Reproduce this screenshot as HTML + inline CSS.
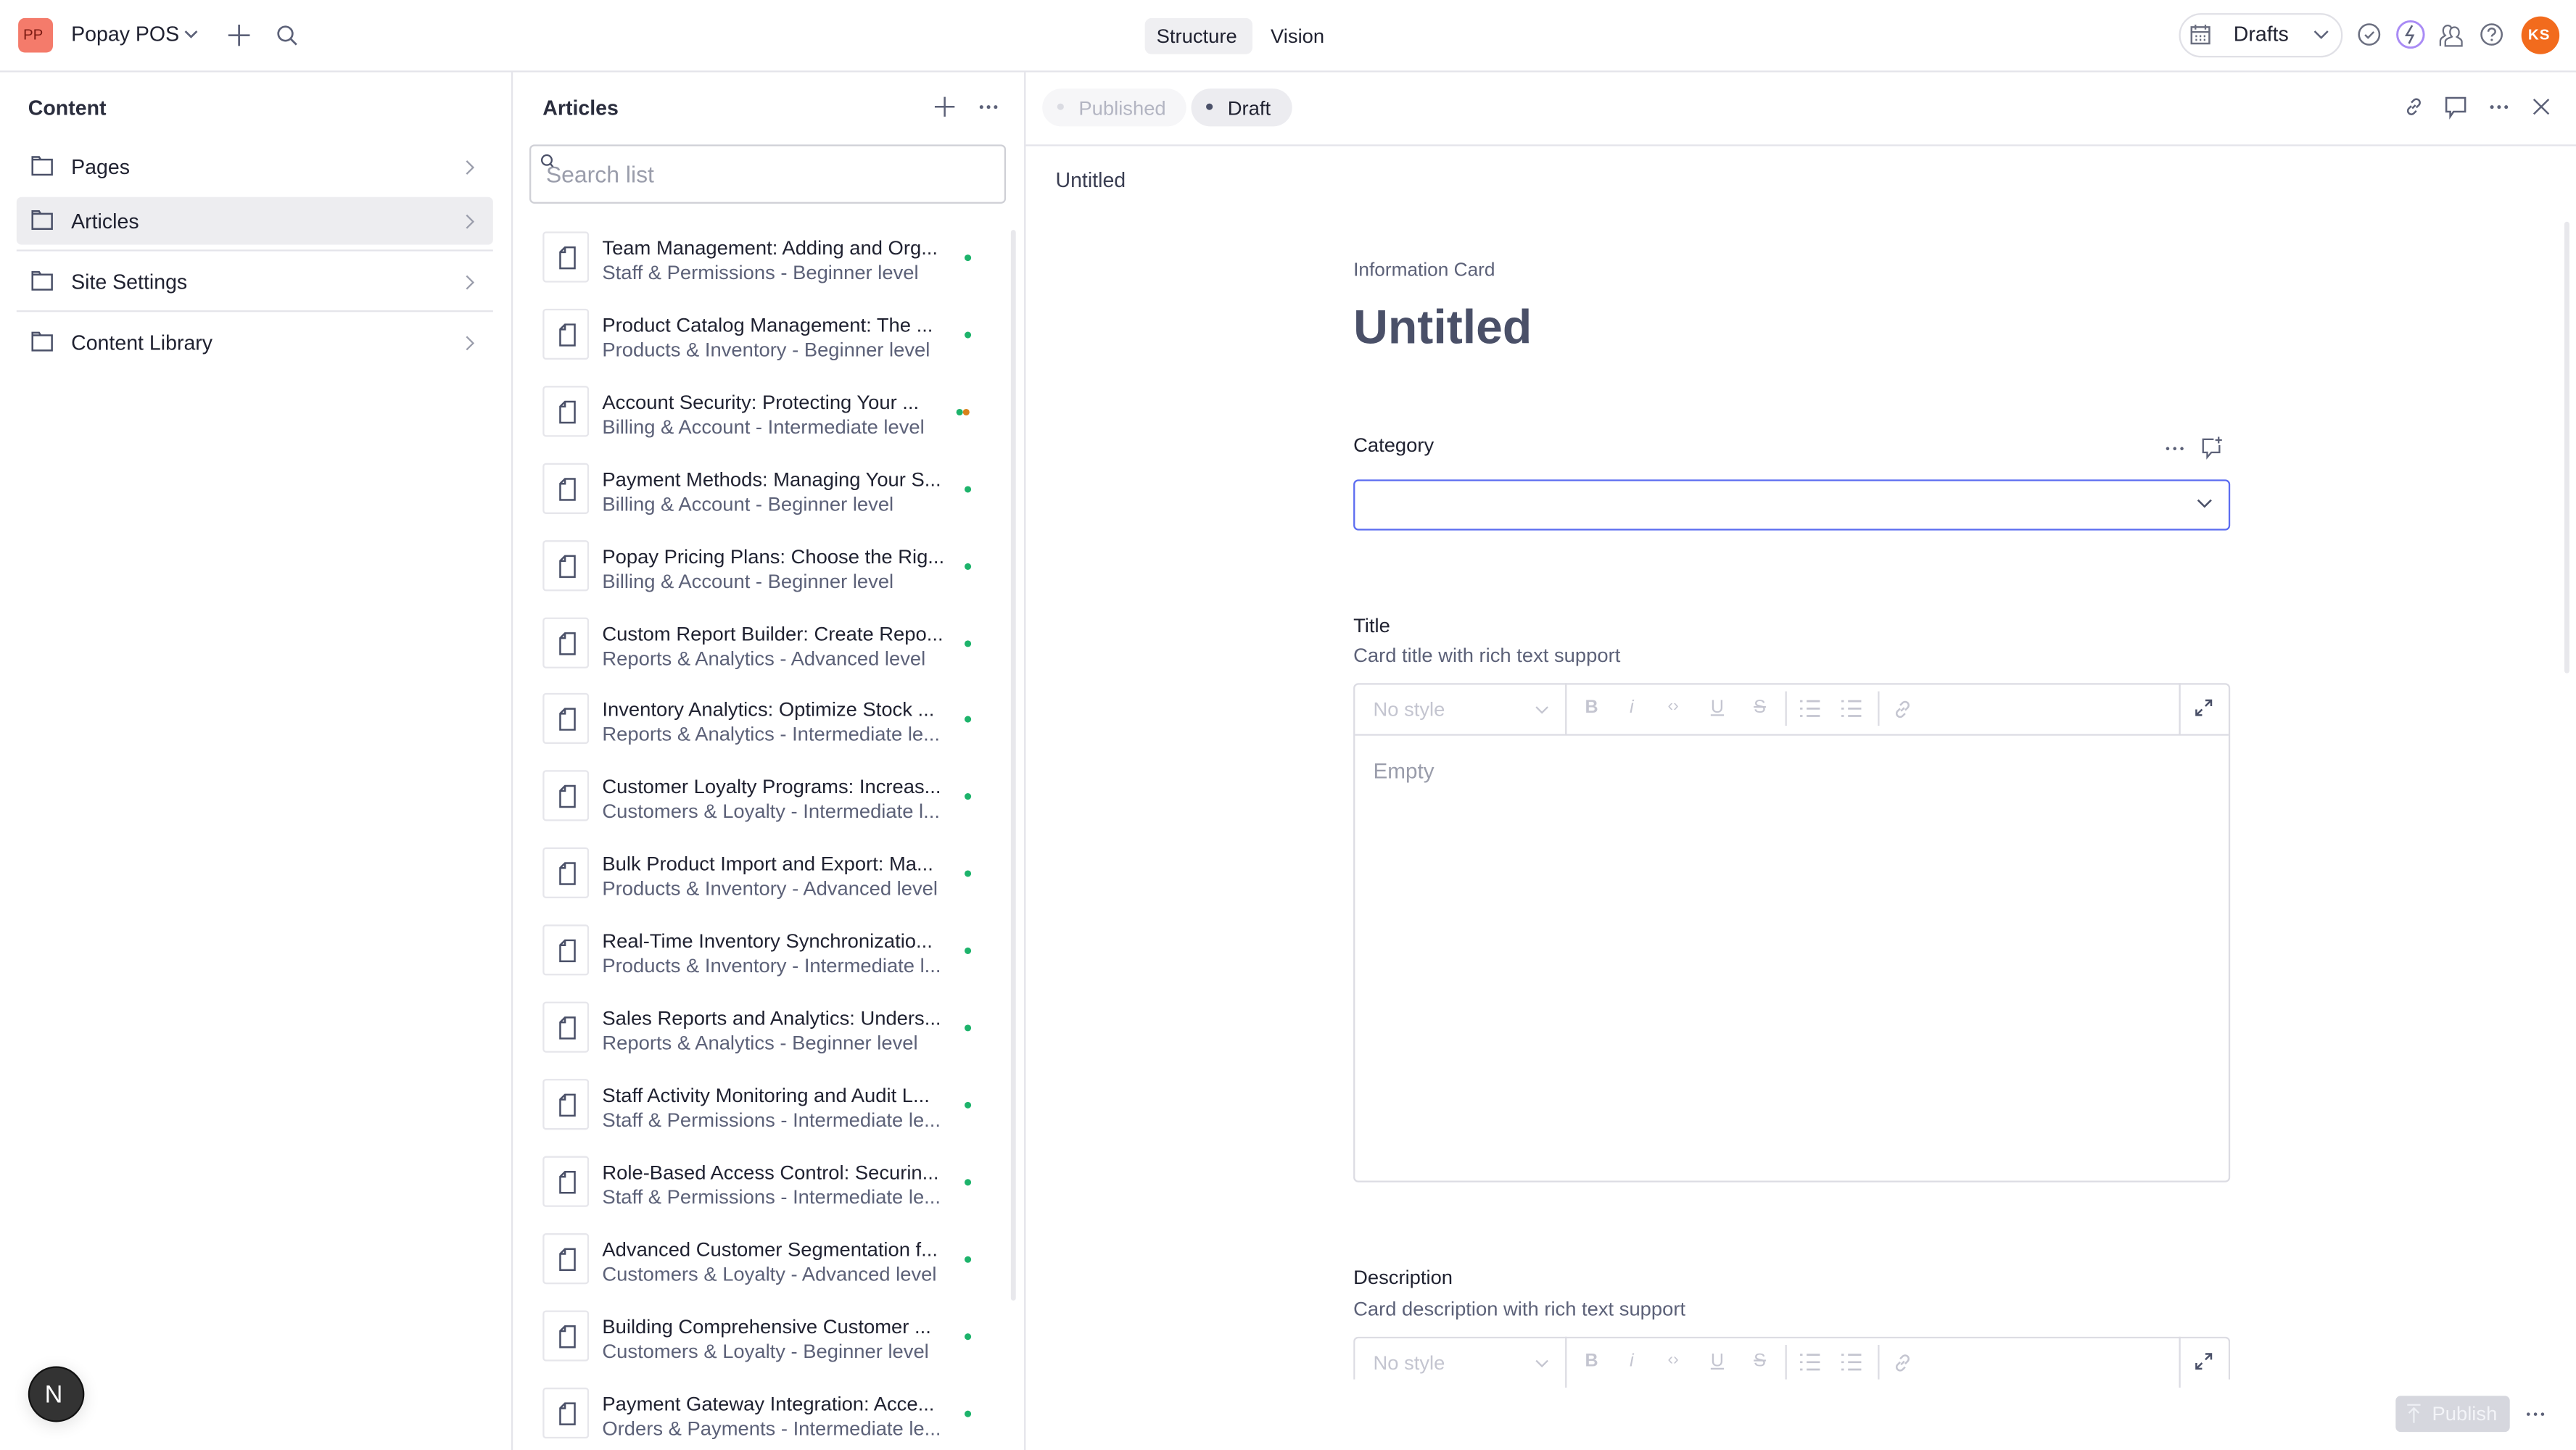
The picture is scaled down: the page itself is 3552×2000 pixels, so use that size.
<!DOCTYPE html>
<html><head><meta charset="utf-8"><style>
*{box-sizing:border-box;margin:0;padding:0}
html,body{width:3552px;height:2000px;overflow:hidden;background:#fff}
#w{position:absolute;left:0;top:0;width:1557px;height:883px;transform:scale(2.2813,2.2650);transform-origin:0 0;font-family:"Liberation Sans",sans-serif;color:#1f2130;font-size:12.5px}
.a{position:absolute}
.t{position:absolute;white-space:nowrap;line-height:1}
svg{position:absolute;overflow:visible}
.ln{position:absolute;background:#e4e4ea}
.it{position:absolute;left:328px;width:270px;height:32px}
.it .ic{position:absolute;left:0;top:0;width:28px;height:31px;border:1px solid #e6e6eb;border-radius:2px}
.it .ti{position:absolute;left:36px;top:3px;font-size:12px;color:#1f2130;white-space:nowrap}
.it .su{position:absolute;left:36px;top:18px;font-size:12px;color:#5c6178;white-space:nowrap}
.it .d{position:absolute;left:255px;top:14px;width:4px;height:4px;border-radius:50%;background:#1db36b}
.tb{position:absolute;left:818px;width:530px;border:1px solid #dcdce3;border-radius:3px}
.tb .bar{position:absolute;left:0;right:0;top:0;height:31px;border-bottom:1px solid #dcdce3}
.g{color:#c4c5d0;font-size:12px}
</style></head><body><div id="w">
<!-- top bar -->
<div class="a" style="left:11px;top:11px;width:21px;height:21px;background:#f47b6b;border-radius:4px"></div>
<div class="t" style="left:14px;top:17px;font-size:9px;color:#7a1a12">PP</div>
<div class="t" style="left:43px;top:15px;font-size:12.5px">Popay POS</div>
<svg style="left:111px;top:18px" width="9" height="6"><path d="M1 1l3.5 3.5L8 1" fill="none" stroke="#5c6178" stroke-width="1.2"/></svg>
<svg style="left:138px;top:15px" width="13" height="13"><path d="M6.5 0v13M0 6.5h13" stroke="#5c6178" stroke-width="1.2"/></svg>
<svg style="left:167px;top:15px" width="13" height="13"><circle cx="5.5" cy="5.5" r="4.3" fill="none" stroke="#5c6178" stroke-width="1.2"/><path d="M8.7 8.7l3.5 3.5" stroke="#5c6178" stroke-width="1.2"/></svg>
<div class="a" style="left:692px;top:11px;width:65px;height:22px;background:#efeff2;border-radius:4px"></div>
<div class="t" style="left:699px;top:16px;font-size:12px">Structure</div>
<div class="t" style="left:768px;top:16px;font-size:12px">Vision</div>
<div class="a" style="left:1317px;top:8px;width:99px;height:27px;border:1px solid #e0e0e6;border-radius:14px"></div>
<svg style="left:1324px;top:15px" width="12" height="12"><rect x="0.6" y="1.5" width="10.8" height="10" fill="none" stroke="#6b6f80" stroke-width="1.1"/><path d="M0.6 4.5h10.8M3 0v3M9 0v3" stroke="#6b6f80"/><path d="M3 7h1M5.5 7h1M8 7h1M3 9.3h1M5.5 9.3h1M8 9.3h1" stroke="#6b6f80" stroke-width="1.2"/></svg>
<div class="t" style="left:1350px;top:15px;font-size:12.5px;color:#1f2130">Drafts</div>
<svg style="left:1398px;top:18px" width="10" height="7"><path d="M1 1l4 4 4-4" fill="none" stroke="#5c6178" stroke-width="1.1"/></svg>
<svg style="left:1425px;top:14px" width="14" height="14"><circle cx="7" cy="7" r="6.2" fill="none" stroke="#6b6f80" stroke-width="1.1"/><path d="M4.5 7.2l1.8 1.8 3.5-3.6" fill="none" stroke="#6b6f80" stroke-width="1.1"/></svg>
<svg style="left:1448px;top:12px" width="18" height="18"><circle cx="9" cy="9" r="8" fill="none" stroke="#a98bf5" stroke-width="1.3"/><path d="M10 3.5L6.5 9.5h4L8 14.5" fill="none" stroke="#5c6178" stroke-width="1.1"/></svg>
<svg style="left:1474px;top:13px" width="15" height="16"><path d="M1 15v-3c0-2 2-2.5 3-3.5-1.5-1-1.8-4-.3-5.3 1.3-1.2 3.5-.8 4 1M4 15h10v-2.5c0-1.7-2-2.3-3-3 1.5-1 1.8-4 .3-5.3-1.5-1.2-3.8-.6-4.3 1.2-.5 1.8.3 3.2 1 4-1 .7-4 1-4 3z" fill="none" stroke="#6b6f80" stroke-width="1"/></svg>
<svg style="left:1499px;top:14px" width="14" height="14"><circle cx="7" cy="7" r="6.2" fill="none" stroke="#6b6f80" stroke-width="1.1"/><path d="M5 5.3c0-2.6 4.2-2.6 4.2 0 0 1.6-2.1 1.6-2.1 3" fill="none" stroke="#6b6f80" stroke-width="1.1"/><circle cx="7.1" cy="10.3" r=".7" fill="#6b6f80"/></svg>
<div class="a" style="left:1524px;top:10px;width:23px;height:23px;border-radius:50%;background:#f26b1d"></div>
<div class="t" style="left:1528px;top:17px;font-size:9px;color:#fff;font-weight:bold;letter-spacing:.5px">KS</div>
<div class="ln" style="left:0;top:43px;width:1557px;height:1px"></div>
<!-- left sidebar -->
<div class="ln" style="left:309px;top:44px;width:1px;height:839px"></div>
<div class="t" style="left:17px;top:60px;font-size:12.5px;font-weight:bold;color:#2a2d3d">Content</div>
<div class="a" style="left:10px;top:120px;width:288px;height:29px;background:#ededf0;border-radius:3px"></div>
<div class="ln" style="left:10px;top:152px;width:288px;height:1px"></div>
<div class="ln" style="left:10px;top:189px;width:288px;height:1px"></div>
<div class="t" style="left:43px;top:96px">Pages</div>
<div class="t" style="left:43px;top:129px">Articles</div>
<div class="t" style="left:43px;top:166px">Site Settings</div>
<div class="t" style="left:43px;top:203px">Content Library</div>
<svg style="left:19px;top:95px" width="13" height="12"><path d="M.6.6h4l1 1.6h6.8v9.2H.6z M.6 2.2h5" fill="none" stroke="#4a5068" stroke-width="1.1"/></svg>
<svg style="left:19px;top:128px" width="13" height="12"><path d="M.6.6h4l1 1.6h6.8v9.2H.6z M.6 2.2h5" fill="none" stroke="#4a5068" stroke-width="1.1"/></svg>
<svg style="left:19px;top:165px" width="13" height="12"><path d="M.6.6h4l1 1.6h6.8v9.2H.6z M.6 2.2h5" fill="none" stroke="#4a5068" stroke-width="1.1"/></svg>
<svg style="left:19px;top:202px" width="13" height="12"><path d="M.6.6h4l1 1.6h6.8v9.2H.6z M.6 2.2h5" fill="none" stroke="#4a5068" stroke-width="1.1"/></svg>
<svg style="left:281px;top:97px" width="6" height="10"><path d="M1 1l4 4-4 4" fill="none" stroke="#9a9dab"/></svg>
<svg style="left:281px;top:130px" width="6" height="10"><path d="M1 1l4 4-4 4" fill="none" stroke="#9a9dab"/></svg>
<svg style="left:281px;top:167px" width="6" height="10"><path d="M1 1l4 4-4 4" fill="none" stroke="#9a9dab"/></svg>
<svg style="left:281px;top:204px" width="6" height="10"><path d="M1 1l4 4-4 4" fill="none" stroke="#9a9dab"/></svg>
<div class="a" style="left:17px;top:832px;width:34px;height:34px;border-radius:50%;background:#333;border:1px solid #111;box-shadow:0 2px 10px rgba(0,0,0,.12)"></div>
<div class="t" style="left:27px;top:842px;font-size:15px;color:#fff">N</div>
<!-- articles panel -->
<div class="ln" style="left:619px;top:44px;width:1px;height:839px"></div>
<div class="t" style="left:328px;top:60px;font-weight:bold;color:#2a2d3d">Articles</div>
<svg style="left:565px;top:59px" width="12" height="12"><path d="M6 0v12M0 6h12" stroke="#5c6178" stroke-width="1.1"/></svg>
<svg style="left:592px;top:64px" width="11" height="3"><circle cx="1.2" cy="1.2" r="1.1" fill="#5c6178"/><circle cx="5.5" cy="1.2" r="1.1" fill="#5c6178"/><circle cx="9.8" cy="1.2" r="1.1" fill="#5c6178"/></svg>
<div class="a" style="left:320px;top:88px;width:288px;height:36px;border:1px solid #cfd0d6;border-radius:3px"></div>
<svg style="left:327px;top:94px" width="8" height="9"><circle cx="3.5" cy="3.5" r="3" fill="none" stroke="#4a5068"/><path d="M5.5 5.5l2 2.5" stroke="#4a5068"/></svg>
<div class="t" style="left:330px;top:99px;font-size:14px;color:#9a9dab">Search list</div>
<div class="a" style="left:611px;top:140px;width:3px;height:652px;background:#e8e8ec;border-radius:2px"></div>
<div id="list"></div>
<!-- editor -->
<div class="ln" style="left:620px;top:88px;width:937px;height:1px"></div>
<div class="a" style="left:630px;top:54px;width:87px;height:23px;background:#f6f6f8;border-radius:12px"></div>
<div class="a" style="left:639px;top:63px;width:4px;height:4px;border-radius:50%;background:#dadbe2"></div>
<div class="t" style="left:652px;top:60px;color:#b3b5c2;font-size:12px">Published</div>
<div class="a" style="left:720px;top:54px;width:61px;height:23px;background:#ececf0;border-radius:12px"></div>
<div class="a" style="left:729px;top:63px;width:4px;height:4px;border-radius:50%;background:#4a5068"></div>
<div class="t" style="left:742px;top:60px;font-size:12px">Draft</div>
<svg style="left:1453px;top:59px" width="12" height="12"><path d="M5 7l2-2M4.5 5.5L3 7a2 2 0 003 3l1.5-1.5M7.5 6.5L9 5a2 2 0 00-3-3L4.5 3.5" fill="none" stroke="#5c6178" stroke-width="1.1"/></svg>
<svg style="left:1478px;top:59px" width="13" height="14"><path d="M.6.6h11.4v8.4H5l-2 3v-3H.6z" fill="none" stroke="#5c6178" stroke-width="1.1"/></svg>
<svg style="left:1505px;top:64px" width="11" height="3"><circle cx="1.2" cy="1.2" r="1.1" fill="#5c6178"/><circle cx="5.5" cy="1.2" r="1.1" fill="#5c6178"/><circle cx="9.8" cy="1.2" r="1.1" fill="#5c6178"/></svg>
<svg style="left:1531px;top:60px" width="10" height="10"><path d="M.5.5l9 9M9.5.5l-9 9" stroke="#5c6178" stroke-width="1.1"/></svg>
<div class="t" style="left:638px;top:104px;font-size:12.5px;color:#3a3e52">Untitled</div>
<div class="a" style="left:1550px;top:135px;width:3px;height:275px;background:#e8e8ec;border-radius:2px"></div>
<div class="t" style="left:818px;top:160px;font-size:11.5px;color:#5c6178">Information Card</div>
<div class="t" style="left:818px;top:186px;font-size:29px;font-weight:bold;color:#4a5068">Untitled</div>
<div class="t" style="left:818px;top:265px;font-size:12px;color:#1f2130">Category</div>
<svg style="left:1309px;top:272px" width="11" height="3"><circle cx="1.2" cy="1.2" r="1" fill="#5c6178"/><circle cx="5.5" cy="1.2" r="1" fill="#5c6178"/><circle cx="9.8" cy="1.2" r="1" fill="#5c6178"/></svg>
<svg style="left:1331px;top:266px" width="13" height="15"><path d="M7 1.5H.6v8h2.5v3l2.5-3H10.5V5M10 0v4M8 2h4" fill="none" stroke="#5c6178" stroke-width="1"/></svg>
<div class="a" style="left:818px;top:292px;width:530px;height:31px;border:1.3px solid #5b6cf0;border-radius:3px"></div>
<svg style="left:1328px;top:304px" width="9" height="6"><path d="M.5.5l4 4 4-4" fill="none" stroke="#4a5068" stroke-width="1.1"/></svg>
<div class="t" style="left:818px;top:375px;font-size:12px">Title</div>
<div class="t" style="left:818px;top:393px;font-size:12px;color:#5c6178">Card title with rich text support</div>
<div class="tb" style="top:416px;height:304px"><div class="bar"></div></div>
<div class="t" style="left:830px;top:463px;font-size:13px;color:#9a9dab">Empty</div>
<div class="t" style="left:818px;top:772px;font-size:12px">Description</div>
<div class="t" style="left:818px;top:791px;font-size:12px;color:#5c6178">Card description with rich text support</div>
<div class="tb" style="top:814px;height:40px;border-bottom:none"></div>
<div class="a" style="left:620px;top:840px;width:937px;height:43px;background:#fff"></div>
<div id="tb1"></div>
<div class="a" style="left:1448px;top:850px;width:69px;height:22px;background:#d6d7de;border-radius:3px"></div>
<svg style="left:1455px;top:855px" width="8" height="12"><path d="M0 .5h8M4 2.5v9M1 5.5l3-3 3 3" fill="none" stroke="#eef0f5" stroke-width="1"/></svg>
<div class="t" style="left:1470px;top:855px;font-size:12px;color:#f3f4f8">Publish</div>
<svg style="left:1527px;top:860px" width="11" height="3"><circle cx="1.2" cy="1.2" r="1" fill="#5c6178"/><circle cx="5.5" cy="1.2" r="1" fill="#5c6178"/><circle cx="9.8" cy="1.2" r="1" fill="#5c6178"/></svg>
</div>
<script>
var L=[["Team Management: Adding and Org...","Staff & Permissions - Beginner level"],["Product Catalog Management: The ...","Products & Inventory - Beginner level"],["Account Security: Protecting Your ...","Billing & Account - Intermediate level",1],["Payment Methods: Managing Your S...","Billing & Account - Beginner level"],["Popay Pricing Plans: Choose the Rig...","Billing & Account - Beginner level"],["Custom Report Builder: Create Repo...","Reports & Analytics - Advanced level"],["Inventory Analytics: Optimize Stock ...","Reports & Analytics - Intermediate le..."],["Customer Loyalty Programs: Increas...","Customers & Loyalty - Intermediate l..."],["Bulk Product Import and Export: Ma...","Products & Inventory - Advanced level"],["Real-Time Inventory Synchronizatio...","Products & Inventory - Intermediate l..."],["Sales Reports and Analytics: Unders...","Reports & Analytics - Beginner level"],["Staff Activity Monitoring and Audit L...","Staff & Permissions - Intermediate le..."],["Role-Based Access Control: Securin...","Staff & Permissions - Intermediate le..."],["Advanced Customer Segmentation f...","Customers & Loyalty - Advanced level"],["Building Comprehensive Customer ...","Customers & Loyalty - Beginner level"],["Payment Gateway Integration: Acce...","Orders & Payments - Intermediate le..."]];
var h='';L.forEach(function(r,i){var y=141+i*46.9;
h+='<div class="it" style="top:'+y+'px"><div class="ic"><svg style="left:9px;top:8px" width="10" height="14"><path d="M.6 3.5L3.5.6h5.9v12.8H.6z M3.5.6v3H.6" fill="none" stroke="#4a5068" stroke-width="1.1"/></svg></div><div class="ti">'+r[0]+'</div><div class="su">'+r[1]+'</div>'+(r[2]?'<div class="d" style="left:250px"></div><div class="d" style="left:254px;background:#d9821b"></div>':'<div class="d"></div>')+'</div>';});
document.getElementById('list').innerHTML=h;
function tb(y){var s='';
s+='<div class="ln" style="left:946px;top:'+y+'px;width:1px;height:31px;background:#dcdce3"></div>';
s+='<div class="ln" style="left:1317px;top:'+y+'px;width:1px;height:31px;background:#dcdce3"></div>';
s+='<div class="ln" style="left:1079px;top:'+(y+5)+'px;width:1px;height:21px;background:#dcdce3"></div>';
s+='<div class="ln" style="left:1135px;top:'+(y+5)+'px;width:1px;height:21px;background:#dcdce3"></div>';
s+='<div class="t g" style="left:830px;top:'+(y+10)+'px">No style</div>';
s+='<svg style="left:928px;top:'+(y+14)+'px" width="8" height="5"><path d="M.5.5l3.5 3.5 3.5-3.5" fill="none" stroke="#c4c5d0"/></svg>';
s+='<div class="t g" style="left:958px;top:'+(y+10)+'px;font-weight:bold;font-size:11px">B</div>';
s+='<div class="t g" style="left:985px;top:'+(y+10)+'px;font-style:italic;font-size:11px">i</div>';
s+='<div class="t g" style="left:1008px;top:'+(y+10)+'px;font-size:10px">&lsaquo;&rsaquo;</div>';
s+='<div class="t g" style="left:1034px;top:'+(y+10)+'px;text-decoration:underline;font-size:11px">U</div>';
s+='<div class="t g" style="left:1060px;top:'+(y+10)+'px;text-decoration:line-through;font-size:11px">S</div>';
s+='<svg style="left:1088px;top:'+(y+10)+'px" width="12" height="11"><path d="M0 1h1.5M0 5.5h1.5M0 10h1.5M4 1h8M4 5.5h8M4 10h8" stroke="#c4c5d0" stroke-width="1.2"/></svg>';
s+='<svg style="left:1113px;top:'+(y+10)+'px" width="12" height="11"><path d="M0 1h1.5M0 5.5h1.5M0 10h1.5M4 1h8M4 5.5h8M4 10h8" stroke="#c4c5d0" stroke-width="1.2"/></svg>';
s+='<svg style="left:1144px;top:'+(y+10)+'px" width="12" height="12"><path d="M5 7l2-2M4.5 5.5L3 7a2 2 0 003 3l1.5-1.5M7.5 6.5L9 5a2 2 0 00-3-3L4.5 3.5" fill="none" stroke="#c4c5d0" stroke-width="1.1"/></svg>';
s+='<svg style="left:1327px;top:'+(y+10)+'px" width="10" height="10"><path d="M6 .5h3.5V4M9.5.5L6 4M.5 6v3.5H4M.5 9.5L4 6" fill="none" stroke="#4a5068" stroke-width="1.1"/></svg>';
return s;}
document.getElementById('tb1').innerHTML=tb(416)+tb(814);
</script>
</body></html>
